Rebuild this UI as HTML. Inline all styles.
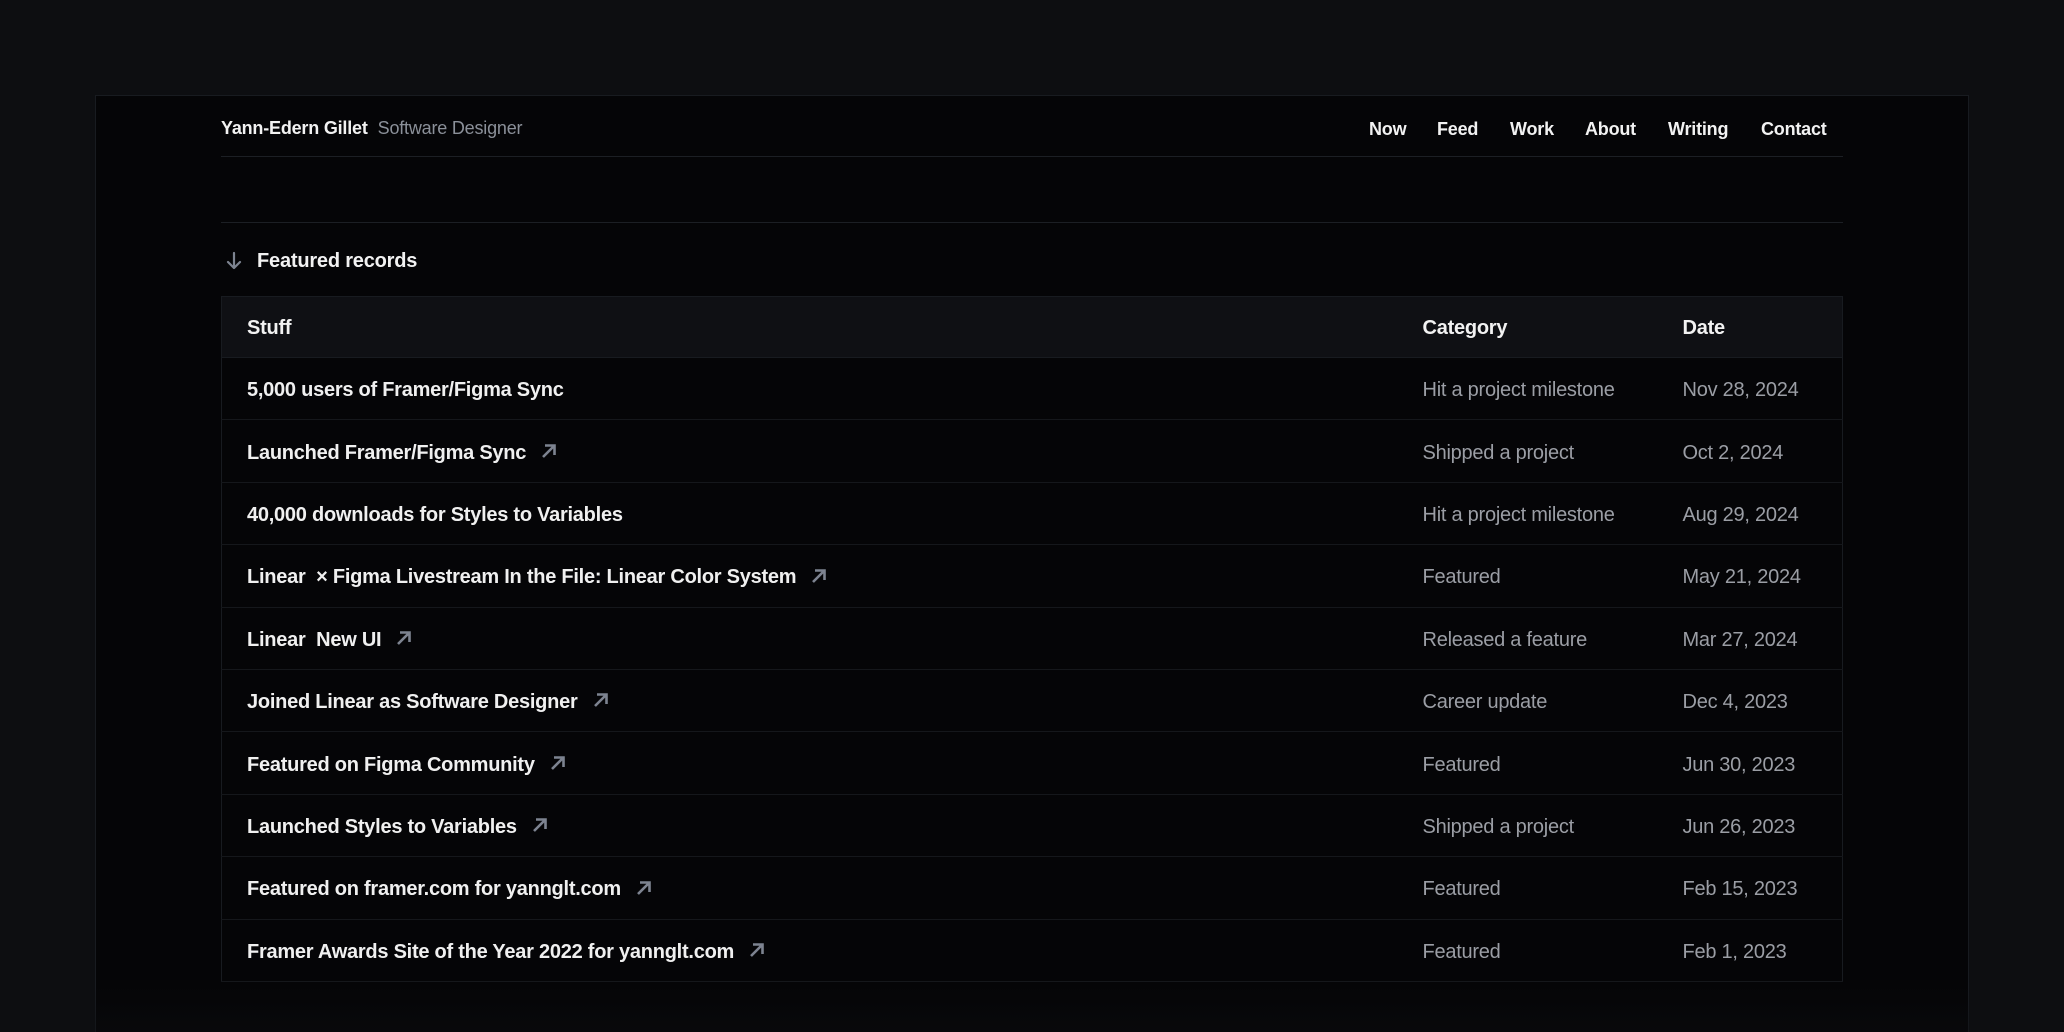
<!DOCTYPE html>
<html><head><meta charset="utf-8"><style>
*{margin:0;padding:0;box-sizing:border-box}
html,body{width:2064px;height:1032px;overflow:hidden}
body{background:#0d0e11;font-family:"Liberation Sans",sans-serif;position:relative}
.frame{position:absolute;left:95px;top:95px;width:1874px;height:937px;background:#050507;border:1px solid #181b20;border-bottom:none}
.fade{position:absolute;left:0;top:985px;width:2064px;height:47px;background:linear-gradient(to bottom,rgba(13,14,17,0),rgba(13,14,17,0.4));pointer-events:none}
.c{position:absolute;left:221px;width:1622px}
.hdr{top:95px;height:62px;border-bottom:1px solid #1c1f24;display:flex;align-items:center;font-size:18px;padding-top:6px;letter-spacing:-0.2px}
.hdr .n{color:#f2f2f2;font-weight:bold}
.hdr .s{color:#8b9099;margin-left:10px}
.nav{position:absolute;top:0;height:62px;padding-top:6px;display:flex;align-items:center;color:#f2f2f2;font-weight:bold;font-size:18px}
.nav span{position:absolute;white-space:nowrap}
.line2{top:222px;height:1px;background:#1c1f24}
.feat{top:244px;height:34px;display:flex;align-items:center;color:#f2f2f2;font-weight:bold;font-size:20px;letter-spacing:-0.2px}
table{position:absolute;left:221px;top:296px;width:1622px;border-collapse:collapse;border:1px solid #181b20;font-size:20px;letter-spacing:-0.25px}
th{background:#0f1014;color:#f2f2f2;text-align:left;font-weight:bold;height:61px;border-bottom:1px solid #181b20;padding-top:3px}
td{height:62.4px;border-bottom:1px solid #15171b;color:#9b9ea5;padding-top:4px}
td:first-child{color:#f0f0f0;font-weight:bold}
th:first-child,td:first-child{padding-left:25px}
.col2{width:260px}.col3{width:160px}
.ar{display:inline-block;vertical-align:middle;margin-left:14px;margin-top:-5px}
</style></head><body>
<div class="frame"></div>
<div class="c hdr"><span class="n">Yann-Edern Gillet</span><span class="s">Software Designer</span>
<div class="nav" style="left:0;width:1622px"><span style="left:1148px">Now</span><span style="left:1216px">Feed</span><span style="left:1289px">Work</span><span style="left:1364px">About</span><span style="left:1447px">Writing</span><span style="left:1540px">Contact</span></div></div>
<div class="c line2"></div>
<div class="c feat"><svg width="22" height="22" viewBox="0 0 22 22" style="margin-left:2px;margin-right:12px"><path d="M11 3v15M5 12l6 6 6-6" stroke="#7d8390" stroke-width="2.2" fill="none" stroke-linecap="round" stroke-linejoin="round"/></svg>Featured records</div>
<table>
<tr><th>Stuff</th><th class="col2">Category</th><th class="col3">Date</th></tr>
<tr><td>5,000 users of Framer/Figma Sync</td><td>Hit a project milestone</td><td>Nov 28, 2024</td></tr>
<tr><td>Launched Framer/Figma Sync<svg class="ar" width="18" height="18" viewBox="0 0 18 18"><path d="M3 15L14 4M5 3.5h9.5V13" stroke="#7d8390" stroke-width="2.6" fill="none"/></svg></td><td>Shipped a project</td><td>Oct 2, 2024</td></tr>
<tr><td>40,000 downloads for Styles to Variables</td><td>Hit a project milestone</td><td>Aug 29, 2024</td></tr>
<tr><td>Linear &nbsp;× Figma Livestream In the File: Linear Color System<svg class="ar" width="18" height="18" viewBox="0 0 18 18"><path d="M3 15L14 4M5 3.5h9.5V13" stroke="#7d8390" stroke-width="2.6" fill="none"/></svg></td><td>Featured</td><td>May 21, 2024</td></tr>
<tr><td>Linear &nbsp;New UI<svg class="ar" width="18" height="18" viewBox="0 0 18 18"><path d="M3 15L14 4M5 3.5h9.5V13" stroke="#7d8390" stroke-width="2.6" fill="none"/></svg></td><td>Released a feature</td><td>Mar 27, 2024</td></tr>
<tr><td>Joined Linear as Software Designer<svg class="ar" width="18" height="18" viewBox="0 0 18 18"><path d="M3 15L14 4M5 3.5h9.5V13" stroke="#7d8390" stroke-width="2.6" fill="none"/></svg></td><td>Career update</td><td>Dec 4, 2023</td></tr>
<tr><td>Featured on Figma Community<svg class="ar" width="18" height="18" viewBox="0 0 18 18"><path d="M3 15L14 4M5 3.5h9.5V13" stroke="#7d8390" stroke-width="2.6" fill="none"/></svg></td><td>Featured</td><td>Jun 30, 2023</td></tr>
<tr><td>Launched Styles to Variables<svg class="ar" width="18" height="18" viewBox="0 0 18 18"><path d="M3 15L14 4M5 3.5h9.5V13" stroke="#7d8390" stroke-width="2.6" fill="none"/></svg></td><td>Shipped a project</td><td>Jun 26, 2023</td></tr>
<tr><td>Featured on framer.com for yannglt.com<svg class="ar" width="18" height="18" viewBox="0 0 18 18"><path d="M3 15L14 4M5 3.5h9.5V13" stroke="#7d8390" stroke-width="2.6" fill="none"/></svg></td><td>Featured</td><td>Feb 15, 2023</td></tr>
<tr><td>Framer Awards Site of the Year 2022 for yannglt.com<svg class="ar" width="18" height="18" viewBox="0 0 18 18"><path d="M3 15L14 4M5 3.5h9.5V13" stroke="#7d8390" stroke-width="2.6" fill="none"/></svg></td><td>Featured</td><td>Feb 1, 2023</td></tr>
</table>
<div class="fade"></div>
</body></html>
